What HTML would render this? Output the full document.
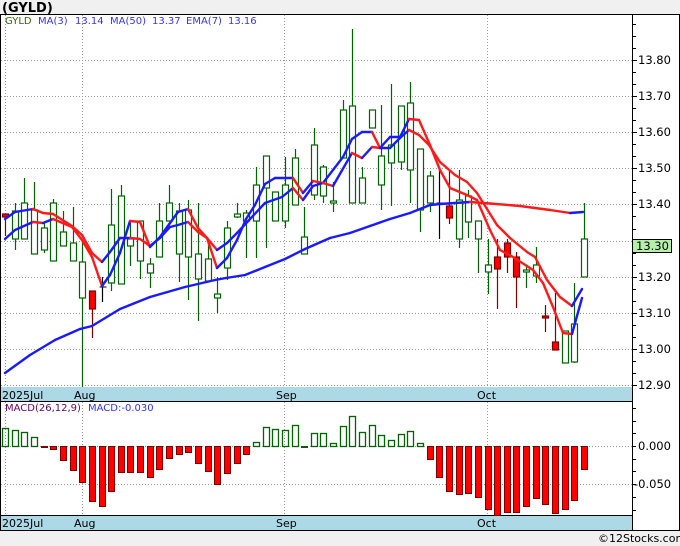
<!DOCTYPE html>
<html><head><meta charset="utf-8">
<style>
html,body{margin:0;padding:0;background:#f0f0f0;}
body{width:680px;height:546px;overflow:hidden;position:relative;font-family:"Liberation Sans","DejaVu Sans",sans-serif;}
svg{position:absolute;left:0;top:0;}
</style></head><body>
<svg id="s" width="680" height="546" viewBox="0 0 680 546" xmlns="http://www.w3.org/2000/svg" font-family="DejaVu Sans, Liberation Sans, sans-serif">
<rect x="0" y="0" width="680" height="546" fill="#f0f0f0"/>
<rect x="0.5" y="14.5" width="679" height="516" fill="#fff" stroke="#000"/>
<text x="2" y="12" font-size="13" font-weight="bold" fill="#000">(GYLD)</text>
<g id="grid"></g>
<rect x="1" y="387" width="631" height="14" fill="#add8e6"/>
<rect x="1" y="515" width="631" height="15" fill="#add8e6"/>
<line x1="0" y1="401.5" x2="632" y2="401.5" stroke="#000"/>
<line x1="0" y1="515.5" x2="632" y2="515.5" stroke="#000"/>
<line x1="632.5" y1="14" x2="632.5" y2="530" stroke="#000"/>
<line x1="0" y1="530.5" x2="680" y2="530.5" stroke="#000"/>
<g font-size="11" fill="#000">
<text x="2" y="399">2025Jul</text><text x="74" y="399">Aug</text><text x="276" y="399">Sep</text><text x="477" y="399">Oct</text>
<text x="2" y="527">2025Jul</text><text x="74" y="527">Aug</text><text x="276" y="527">Sep</text><text x="477" y="527">Oct</text>
</g>
<g id="c"></g>
<g font-size="10">
<text x="5" y="24" fill="#336600">GYLD</text>
<text x="38" y="24" fill="#3333ff">MA(3)</text><text x="75" y="24" fill="#3333ff">13.14</text>
<text x="110" y="24" fill="#3333ff">MA(50)</text><text x="152" y="24" fill="#3333ff">13.37</text>
<text x="186" y="24" fill="#3333ff">EMA(7)</text><text x="228" y="24" fill="#3333ff">13.16</text>
<text x="5" y="411" fill="#660066">MACD(26,12,9)</text>
<text x="88" y="411" fill="#3333ff">MACD:-0.030</text>
</g>
<g font-size="11.5" fill="#000" id="ax"></g>
<rect x="632.5" y="239.5" width="39" height="13" fill="#b4f0a8" stroke="#000"/>
<text x="636" y="250" font-size="11.5" fill="#000">13.30</text>
<text x="598" y="542" font-size="11" fill="#000">©12Stocks.com</text>
</svg>
<script>
var NS="http://www.w3.org/2000/svg";
function el(p,t,a){var e=document.createElementNS(NS,t);for(var k in a)e.setAttribute(k,a[k]);p.appendChild(e);return e;}
var g=document.getElementById('grid'),c=document.getElementById('c'),ax=document.getElementById('ax');
var dash={"stroke":"#999","stroke-dasharray":"1,2","stroke-width":"1"};
function L(p,x1,y1,x2,y2,a){var o={x1:x1,y1:y1,x2:x2,y2:y2};for(var k in a)o[k]=a[k];return el(p,'line',o);}
var labs=["13.80","13.70","13.60","13.50","13.40","13.30","13.20","13.10","13.00","12.90"];
for(var i=0;i<10;i++){var y=60+i*36.1;var yy=Math.round(y)+0.5;L(g,1,yy,632,yy,dash);L(ax,632,yy,637,yy,{stroke:"#000"});
 if(i!=5)el(ax,'text',{x:638,y:Math.round(y)+4}).textContent=labs[i];}
for(var y=24;y<387;y+=12.03){L(ax,632,Math.round(y)+0.5,636,Math.round(y)+0.5,{stroke:"#000"});}
[5,82,284,487].forEach(function(x){L(g,x+0.5,15,x+0.5,387,dash);L(g,x+0.5,402,x+0.5,515,dash);});
L(g,1,446.5,632,446.5,dash);L(g,1,484.5,632,484.5,dash);
for(var y=408;y<515;y+=12.7){L(ax,632,Math.round(y)+0.5,636,Math.round(y)+0.5,{stroke:"#000"});}
el(ax,'text',{x:638,y:450}).textContent="0.000";
el(ax,'text',{x:634,y:488}).textContent="-0.050";
function X(i){return 5+9.65*i;}
// MACD
var m=[428,430,432,437,447,449,460,470,482,501,506,491,472,472,472,477,469,458,454,452,463,471,484,473,463,454,442,427,429,430,425,446,433,433,443,426,416,432,425,435,440,434,431,443,459,477,491,494,493,497,509,515,512,512,506,498,504,513,509,500,469];
m.forEach(function(v,i){var x=Math.round(X(i))-3;
 if(v==446||v==447){el(c,'rect',{x:x,y:446,width:7,height:2,fill:(i==4?"#800000":"#006400")});return;}
 if(v<446)el(c,'rect',{x:x+0.5,y:v+0.5,width:6,height:446-v,fill:"none",stroke:"#006400","stroke-width":1.3});
 else el(c,'rect',{x:x+0.5,y:446.5,width:6,height:v-446,fill:"#ff0000",stroke:"#800000","stroke-width":1});
});
// candles [high,low,top,bot,type]
var cd=[[214,236,214,217,'r'],[203,250,211,239,'g'],[178,239,203,239,'g'],[182,254,210,254,'g'],[222,253,228,250,'g'],[199,261,203,261,'g'],[211,246,232,246,'g'],[207,261,243,261,'g'],[239,387,262,298,'g'],[291,338,291,309,'r'],[277,302,287,288,'k'],[189,291,225,283,'g'],[185,284,196,284,'g'],[221,266,239,246,'g'],[221,279,221,261,'g'],[258,288,264,273,'g'],[203,257,221,257,'g'],[185,221,203,221,'g'],[203,282,211,254,'g'],[200,300,210,257,'g'],[203,321,254,279,'g'],[240,281,259,281,'g'],[277,313,294,298,'g'],[221,280,228,268,'g'],[203,218,214,217,'g'],[210,258,213,221,'g'],[167,258,185,221,'g'],[156,248,156,188,'g'],[192,221,192,221,'g'],[157,228,185,221,'g'],[149,205,158,205,'g'],[207,254,237,254,'g'],[128,200,145,195,'g'],[165,203,167,196,'g'],[182,212,201,203,'g'],[100,158,110,158,'g'],[29,203,106,203,'g'],[167,203,178,203,'g'],[110,128,110,128,'g'],[105,210,156,185,'g'],[84,206,145,163,'g'],[106,170,106,162,'g'],[82,203,103,170,'g'],[149,232,149,210,'g'],[171,212,176,203,'g'],[167,239,203,204,'k'],[170,224,206,218,'r'],[170,248,200,239,'g'],[190,238,196,222,'g'],[221,273,221,239,'g'],[239,294,265,272,'g'],[239,309,257,269,'r'],[239,273,243,257,'r'],[252,308,257,277,'r'],[265,288,270,272,'g'],[247,283,265,276,'g'],[305,332,316,318,'r'],[293,350,342,350,'r'],[331,363,331,363,'g'],[283,363,324,362,'g'],[203,277,239,277,'g']];
cd.forEach(function(d,i){var x=Math.round(X(i))+0.5;
 var col=d[4]=='g'?"#006400":(d[4]=='r'?"#800000":"#000");
 L(c,x,d[0],x,d[1],{stroke:col,"stroke-width":1.2});
 if(d[4]=='k'){L(c,x-3,d[2],x+4,d[2],{stroke:"#000"});return;}
 var h=Math.max(d[3]-d[2],2);
 el(c,'rect',{x:x-3,y:d[2],width:6,height:h,fill:d[4]=='r'?"#ff0000":"#fff",stroke:col,"stroke-width":1.2});
});
function line(pts){for(var i=1;i<pts.length;i++){var a=pts[i-1],b=pts[i];
 L(c,a[0],a[1],b[0],b[1],{stroke:(b[1]<=a[1]?"#1a1aff":"#ff1a1a"),"stroke-width":2.4,"stroke-linecap":"round"});}}
line([[5,373],[30,355],[55,340],[80,329],[92,326],[120,309],[150,297],[185,287],[215,280],[226,278],[245,275],[265,267],[285,259],[305,249],[330,238],[350,233],[370,226],[390,219],[410,213],[430,205],[440,204],[455,203],[470,202],[490,203.5],[520,206],[550,210],[570,213],[583,212]]);
line([[5,239],[15,230],[33,222],[43,223],[53,219],[72,227],[82,240],[92,257],[102,286],[110,275],[120,253],[130,221],[140,222],[150,247],[160,237],[170,223],[178,212],[188,209],[198,228],[207,238],[217,268],[227,258],[237,240],[246,219],[255,205],[265,184],[275,178],[293,178],[303,193],[313,181],[323,183],[333,170],[343,157],[352,139],[362,132],[372,132],[380,148],[390,137],[400,137],[409,119],[419,120],[430,145],[440,170],[450,188],[467,195],[477,200],[490,230],[500,250],[513,257],[533,270],[543,283],[553,307],[563,333],[572,334],[582,298]]);
line([[5,219],[15,212],[33,209],[43,213],[53,214],[72,226],[82,235],[92,253],[102,262],[110,252],[120,238],[130,238],[140,239],[150,246],[160,238],[170,227],[178,225],[188,222],[198,232],[207,238],[217,250],[227,243],[237,233],[265,203],[282,197],[293,188],[303,200],[313,186],[323,183],[333,186],[352,153],[362,158],[372,147],[380,148],[390,148],[400,138],[409,130],[419,135],[429,145],[440,162],[455,175],[467,182],[477,193],[497,225],[510,238],[527,252],[535,257],[547,280],[560,297],[572,306],[582,289]]);
</script>
</body></html>
